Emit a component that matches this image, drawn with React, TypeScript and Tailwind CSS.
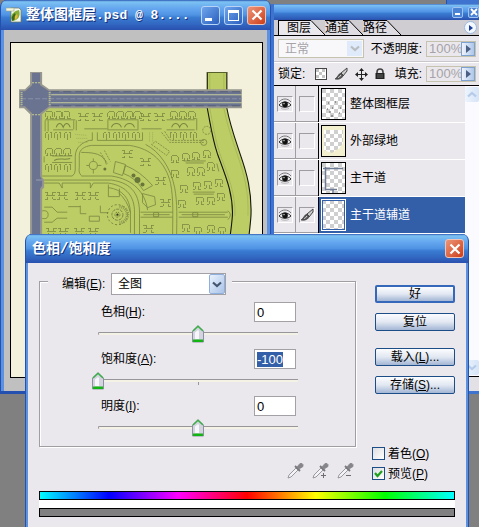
import React, { useEffect, useRef, useState } from "react";
import clsx from "clsx";

const titleBar =
  "bg-[linear-gradient(to_bottom,#2d58b4_0%,#7cc2f2_6%,#68aaf0_25%,#4f93e4_50%,#3a7cd2_58%,#3268c2_80%,#2a50ae_100%)]";

interface Layer {
  name: string;
  art: "dots" | "land" | "road" | "none";
  selected?: boolean;
}

const layers: Layer[] = [
  { name: "整体图框层", art: "dots" },
  { name: "外部绿地", art: "land" },
  { name: "主干道", art: "road" },
  { name: "主干道辅道", art: "none", selected: true },
];

/* ---------- icons ---------- */

function DocumentIcon() {
  return (
    <svg viewBox="0 0 16 16" className="h-4 w-4 shrink-0">
      <path d="M5 1h8l2 2v12H5z" fill="#f2f6ee" stroke="#6d7a55" strokeWidth="0.7" />
      <path d="M0 1h8v3H0z" fill="#f4f6e2" stroke="#9ca878" strokeWidth="0.6" />
      <path d="M13 3c-5 1-8 4-8 8l2 3c5-1 8-5 6-11z" fill="#86ad35" />
      <path d="M9 6c-3 2-4 5-3 8 3-1 5-4 3-8z" fill="#36691f" />
      <path d="M11 7c-2 1-3 3-2 6 3-2 3-4 2-6z" fill="#e5b936" />
    </svg>
  );
}

function EyeIcon() {
  return (
    <svg viewBox="0 0 14 12" className="h-3 w-3.5">
      <path d="M1 4c3-4 9-4 12 0" fill="none" stroke="#777" strokeWidth="1" />
      <path d="M1 7c3-4 9-4 12 0-3 3-9 3-12 0z" fill="#e8e8e8" stroke="#333" strokeWidth="1" />
      <circle cx="7" cy="6.4" r="2.8" fill="#111" />
      <circle cx="6" cy="5.6" r="0.8" fill="#bbb" />
      <path d="M3 10.4c2 1.2 6 1.2 8 0" fill="none" stroke="#aaa" strokeWidth="0.8" />
    </svg>
  );
}

function BrushIcon() {
  return (
    <svg viewBox="0 0 14 14" className="h-3.5 w-3.5">
      <path d="M13 1 7 6l2 3 4-5z" fill="#ccc" stroke="#444" strokeWidth="1" />
      <path d="M7 6C4 7 4 10 1 12c4 1 8-1 8-4z" fill="#555" stroke="#333" strokeWidth="0.6" />
      <path d="M4 10.500c1 0 2-1 3-2.500" stroke="#ddd" strokeWidth="1" fill="none" />
    </svg>
  );
}

function TransparencyIcon() {
  return (
    <svg viewBox="0 0 12 12" className="h-3 w-3">
      <rect x="0.5" y="0.5" width="11" height="11" fill="#fff" stroke="#444" />
      <path d="M1 1h3v3H1zM7 1h3v3H7zM4 4h3v3H4zM1 7h3v3H1zM7 7h3v3H7z" fill="#c4c4c4" />
    </svg>
  );
}

function MoveIcon() {
  return (
    <svg viewBox="0 0 13 13" className="h-[13px] w-[13px]">
      <path d="M6.5 1v11M1 6.5h11" stroke="#222" strokeWidth="1" />
      <path d="m6.5 0 2.5 3H4zM6.5 13 4 10h5zM0 6.5 3 4v5zM13 6.5 10 4v5z" fill="#222" />
    </svg>
  );
}

function LockIcon() {
  return (
    <svg viewBox="0 0 10 12" className="h-3 w-2.5">
      <path d="M2 6V4c0-4 6-4 6 0v2" fill="none" stroke="#444" strokeWidth="1.6" />
      <path d="M0.5 5h9v6h-9z" fill="#222" />
      <path d="M2 7h6M2 9h6" stroke="#777" strokeWidth="0.8" />
    </svg>
  );
}

function EyedropperIcon({ sign }: { sign?: "+" | "-" }) {
  return (
    <svg viewBox="0 0 17 18" className="h-[18px] w-[17px]">
      <path d="m1 16 1-3 7-7 2 2-7 7z" fill="#f4f4f6" stroke="#8e8e94" strokeWidth="0.9" />
      <path d="m8 4 5 5" stroke="#77777c" strokeWidth="1.8" />
      <path d="m10 5 3-3.5h2l1 1v2L12 7z" fill="#85858a" stroke="#85858a" strokeWidth="0.8" />
      {sign && <path d="M9 13.5h5" stroke="#6c6c71" />}
      {sign === "+" && <path d="M11.5 11v5" stroke="#6c6c71" />}
    </svg>
  );
}

function Chevron({ className, up }: { className?: string; up?: boolean }) {
  return (
    <svg viewBox="0 0 10 7" className={clsx("h-[7px] w-2.5", className)}>
      <path d={up ? "M1 5.5 5 2l4 3.5" : "M1 1.5 5 5l4-3.5"} fill="none" stroke="currentColor" strokeWidth="2.2" />
    </svg>
  );
}

function CloseGlyph() {
  return (
    <svg viewBox="0 0 12 12" className="h-3 w-3">
      <path d="m1.5 1.5 9 9M10.5 1.5l-9 9" stroke="#fff" strokeWidth="2.2" />
    </svg>
  );
}

/* ---------- site plan ---------- */

const arches = [
  [45, 111], [54, 111], [62, 111], [107, 111], [116, 111], [125, 111], [133, 111],
  [169, 111], [178, 111], [187, 111], [45, 148], [54, 148], [63, 148],
  [170, 155], [181, 153], [191, 152], [202, 150], [170, 169], [186, 167], [196, 167],
  [206, 162], [179, 184], [192, 181], [203, 180], [214, 178], [177, 199], [195, 196],
  [206, 196], [216, 192], [181, 223], [193, 226], [206, 224], [217, 226],
];
const tees = [
  [45, 132], [54, 132], [64, 132], [103, 132], [113, 132], [122, 132], [132, 132],
  [169, 132], [179, 132], [189, 132], [45, 164], [54, 164], [64, 164],
];
const blocks = [
  [77, 112], [91, 112], [139, 112], [153, 112], [121, 149], [139, 157], [154, 175],
  [44, 190], [56, 190], [74, 190], [87, 190], [45, 226], [57, 226], [73, 226], [87, 226],
  [142, 223], [159, 197],
];

function SitePlan() {
  return (
    <svg viewBox="11 43 250 334" preserveAspectRatio="xMinYMin slice" className="h-full w-full">
      <path d="M41 107h166c3 15 5 30 10 46 6 20 13 28 15 48v176H41z" fill="#bccd66" />
      <path d="M206 72h20v36c3 16 8 30 13 45 7 20 12 38 11 62-1 16-4 30-4 50h-20c2-20 5-35 6-50 1-22-7-40-15-62-5-15-8-30-11-45z" fill="#bccd66" />
      <path d="M206.5 72v36c3 15 5 30 10 45 8 22 16 40 15 62-1 15-4 30-6 50M226 72v36c3 16 8 30 13 45 7 20 12 38 11 62-1 16-4 30-4 50" fill="none" stroke="#15180a" strokeWidth="1.1" />
      <path d="M209 72v36c3 15 5 30 10 45 8 22 16 40 15 62M223 72v36c3 16 8 30 13 45 7 20 12 38 11 62" fill="none" stroke="#a0b055" strokeWidth="0.7" />
      <path d="M206.5 72.5H226" stroke="#55602b" />

      <g fill="none" stroke="#7b8942" strokeWidth="0.8" shapeRendering="crispEdges">
        {arches.map(([x, y]) => (
          <path key={`a${x}-${y}`} transform={`translate(${x} ${y})`} d="M0.500 7.500h2v-3M0.500 5.500v-4l1-1h5l1 1v4M5.500 4.500v3h3" />
        ))}
        {tees.map(([x, y]) => (
          <path key={`t${x}-${y}`} transform={`translate(${x} ${y})`} d="M0.500 5.500v-5h2M3.500 1.500v6M6.500 5.500v-5h-2" />
        ))}
        {blocks.map(([x, y]) => (
          <path key={`b${x}-${y}`} transform={`translate(${x} ${y})`} d="M0.500 1.500h3v3h-2M0.500 8.500h3v-2M11.500 1.500h-3v3h2M11.500 8.500h-3v-2M3.500 4.500h5" />
        ))}
      </g>
      <g fill="none" stroke="#78863f" strokeWidth="0.8">
        <path d="M45 119.5h30M45 120v11M48 120v11M53 129.500h20M73.500 120v9M107 119.5h31M107 129.5h31M107.500 120v9M137.500 120v9M166 119.5h28M166 129.5h28M52 155.500h20M52 162h20M44 156v6M76 120v10M84 128.5h23M141 128.5h20M196 118v12" />
        <path d="M56 127c2-5 5-5 7 0 2-5 5-5 7 0M111 127c2-5 8-5 10 0M124 127c2-5 8-5 10 0M171 127c2-5 6-5 8 0 2-5 6-5 8 0M54 160c5-3 10 0 16-2" strokeWidth="1" />
        <path d="M42 175.5h30q3-2 3-6V156c0-10 8-14 14-16h3v-8M97 132v8h45v-8M81 175q-3-3-2-8v-12c0-6 5-9 12-10h38c22 3 36 17 41 38 3 16 2 32 2 51" />
        <path d="M81 175.5h30c22 3 34 17 36 34M145 144c14 7 25 23 29 43 3 16 2 32 2 47" />
        <path d="M44 179.5h67c22 3 28 16 28 33v22M44 182.500h15l3 5v-5h28v5l3-5h15c19 3 26 14 26 29v22M108 187q21 3 22 25v20" />
        <path d="M81 152c12 0 23 1 25 12M86 165h3M97 165h4M93 158v3M93 169v4" />
        <circle cx="93" cy="165" r="4" />
        <path d="m100 152 7 11M104 150l6 11" strokeDasharray="2 1" />
        <path d="m115 161 10 3-3 11-9-3zM125 165q15 6 27 20l-9 5q-8-13-20-17z" />
        <path d="m142 193 12 3 1 8-8 3-5-5zM108 184v12h11v-8M118 192q9 8 12 20" />
        <path d="m151 144 15 11 3-4-14-10zM161 132l8 10h34M164 131l6 9h33" strokeDasharray="2 1" />
        <circle cx="203" cy="142" r="3" />
        <circle cx="206" cy="130" r="4" strokeDasharray="2 1" />
        <path d="M140 211.5h32M140 216.500h32M178 211.5h49M178 216.500h49M143 214h26M181 214h43M153 212h5v4h-5zM192 212h5v4h-5zM227 210q5 4 0 9" />
        <path d="M44 206.500h8l5 5h10M68 206h12M44 221.500h8l5-4h10M80 205v8h6M89 215.500h10v5H89zM100 205v7h8" />
        <path d="M183 160.500h22M185 162.5h18M192 191.5h22M193 193.5h20M216 163l2 8" />
        <path d="M75 134l12 1M76 138h12M78 142h9M149 132v10M152 132v9" stroke="#98a752" strokeDasharray="1 1" />
        <circle cx="44" cy="214" r="4" />
      </g>
      <g fill="none" stroke="#6f7d39" strokeWidth="0.9">
        <circle cx="117" cy="214" r="10" strokeDasharray="2 2" />
        <path d="M119 206a8 8 0 0 1 0 16" strokeWidth="3.500" stroke="#8e9b50" strokeDasharray="1 1" />
        <circle cx="117" cy="214" r="5.500" strokeDasharray="3 1" />
        <circle cx="117" cy="214" r="2.500" strokeDasharray="2 1" />
        <circle cx="117" cy="214" r="1" fill="#222" />
      </g>
      <g fill="#68763a">
        <circle cx="133" cy="175" r="2" />
        <circle cx="137" cy="179.5" r="3" />
        <circle cx="142" cy="184" r="2" />
        <circle cx="104.5" cy="168.5" r="1.5" />
      </g>

      <path d="M30 72h12v12l7 5h192v19H49l-7 6v63l2 2v8l-2 2v188H30V114l-6-6h-5V89h6l5-5z" fill="#97978f" />
      <path d="M32 73h8v12l9 6h191v15H49l-9 7v63l2 3v6l-2 3v189h-8V113l-7-7h-5V91h5l7-6z" fill="#6a7390" />
      <path d="M51 94.5h190M51 102.5h190" stroke="#c6cc9a" />
      <path d="M51 91.5h190M51 105.5h190" stroke="#57607a" strokeDasharray="8 4" />
      <path d="M21 98.5h220" stroke="#8890a6" strokeDasharray="5 2" />
      <path d="M21.5 92v13M49.5 92v13" stroke="#cdd08c" strokeWidth="2" strokeDasharray="1 1" />
      <path d="M32 82.500h8M32 114.5h8" stroke="#cdd08c" strokeDasharray="2 1" />
      <path d="M36 179.5h6" stroke="#9aa1b4" />
    </svg>
  );
}

/* ---------- document window ---------- */

const captionButton =
  "flex h-[19px] w-[19px] items-center justify-center rounded-[3px] border border-[#b7d3f5] bg-linear-to-br from-[#6fa5ec] to-[#2c5fbe]";
const closeButton =
  "flex h-[19px] w-[19px] items-center justify-center rounded-[3px] border border-[#eec4b8] bg-linear-to-br from-[#ec9477] to-[#cc3a10]";

function DocumentWindow() {
  return (
    <section className="absolute top-0 left-0 flex h-[394px] w-[271px] flex-col overflow-hidden rounded-t-[7px] border-x border-[#2450b0] bg-[#2450b0]">
      <header className={clsx("flex h-[30px] shrink-0 items-center pr-1 pl-[5px]", titleBar)}>
        <DocumentIcon />
        <h1 className="ml-1 flex-1 truncate font-['Liberation_Mono','Noto_Sans_CJK_SC',monospace] text-[13px] font-bold text-white [text-shadow:1px_1px_0_#12307a]">
          <span className="text-sm">整体图框层</span>.psd @ 8....
        </h1>
        <div className="flex gap-1">
          <button aria-label="Minimize" className={captionButton}>
            <span className="mt-2 mr-1 h-[3px] w-[7px] bg-white" />
          </button>
          <button aria-label="Maximize" className={captionButton}>
            <span className="h-[11px] w-[11px] border border-t-[3px] border-white" />
          </button>
          <button aria-label="Close" className={closeButton}>
            <CloseGlyph />
          </button>
        </div>
      </header>
      <div className="mb-[3px] flex min-h-0 flex-1 border-x-[3px] border-[#5c91e2] bg-[#c0c0c0] pt-3 pr-1 pb-[13px] pl-1.5">
        <div className="min-w-0 flex-1 border border-black bg-[#f3f0dc]">
          <SitePlan />
        </div>
      </div>
    </section>
  );
}

/* ---------- layers panel ---------- */

function TabSlant({ active }: { active?: boolean }) {
  return (
    <svg viewBox="0 0 14 15" className="h-[15px] w-3.5">
      <path d="M0 0 14 15H0z" fill={active ? "#ebe8ed" : "#dfdde2"} />
      <path d="M0 0.5 14 15" stroke="#000" fill="none" />
    </svg>
  );
}

function PanelTab({ label, active, first }: { label: string; active?: boolean; first?: boolean }) {
  return (
    <button className="flex h-[15px]">
      <span
        className={clsx(
          "flex items-center border-t border-black leading-none",
          first && "border-l pl-2",
          active ? "bg-[#ebe8ed]" : "bg-[#dfdde2]"
        )}
      >
        {label}
      </span>
      <TabSlant active={active} />
    </button>
  );
}

function PercentField({ id, label }: { id: string; label: string }) {
  return (
    <div className="flex items-center gap-1">
      <label htmlFor={id}>{label}</label>
      <div className="flex h-4 w-[50px] items-center border border-[#c5c3ae] bg-[#ebe8ed] pl-0.5">
        <input id={id} defaultValue="100%" disabled className="w-0 min-w-0 flex-1 text-[13px] text-[#a5a3a8]" />
        <button
          aria-label={`${label} slider`}
          className="flex h-3.5 w-3.5 shrink-0 items-center justify-center border border-[#7fa3d0] bg-linear-to-r from-[#eef4fd] to-[#adc6ea]"
        >
          <svg viewBox="0 0 5 8" className="h-2 w-[5px]">
            <path d="M0 0v8l5-4z" fill="#4b6083" />
          </svg>
        </button>
      </div>
    </div>
  );
}

function LayerThumb({ art, selected }: { art: Layer["art"]; selected?: boolean }) {
  return (
    <div className={clsx("h-8 w-[25px] shrink-0 border", selected ? "border-white" : "border-black")}>
      <svg viewBox="0 0 23 30" className="h-full w-full">
        <defs>
          <pattern id={`checker-${art}`} width="8" height="8" patternUnits="userSpaceOnUse">
            <rect width="8" height="8" fill="#fff" />
            <path d="M0 0h4v4H0zM4 4h4v4H4z" fill="#cfcfcf" />
          </pattern>
        </defs>
        <rect width="23" height="30" fill={`url(#checker-${art})`} />
        {art === "dots" && <path d="M6 14h1M10 19h1M13 13h1M7 23h2M9 27h2M17 24h1M18 19h1M5 20h1" stroke="#555" />}
        {art === "land" && <path d="M0 0h23v30H0zM2 4v20l8 3 4-3 3-1 4-6V4z" fill="#f3f0cf" fillRule="evenodd" />}
        {art === "road" && <path d="M1 5.5h20M3.5 4v23M3 26.5h12M11 27v3" stroke="#707b94" strokeWidth="1.5" fill="none" />}
        {selected && <rect x="0.5" y="0.5" width="22" height="29" fill="none" stroke="#335ea8" />}
      </svg>
    </div>
  );
}

function LayerRow({ layer }: { layer: Layer }) {
  const cell = "flex h-4 w-4 items-center justify-center border border-t-[#9f9da2] border-l-[#9f9da2] border-r-white border-b-white";
  return (
    <li className="flex h-[37px] border-b border-white">
      <div className="flex w-[22px] items-center justify-center border-r border-b border-[#9f9da2]">
        <button aria-label={`Show ${layer.name}`} className={cell}>
          <EyeIcon />
        </button>
      </div>
      <div className="flex w-[22px] items-center justify-center border-b border-[#9f9da2]">
        <button aria-label={`Link ${layer.name}`} className={cell}>
          {layer.selected && <BrushIcon />}
        </button>
      </div>
      <div
        className={clsx(
          "flex min-w-0 flex-1 items-center gap-1 border-l border-black pl-0.5",
          layer.selected && "bg-[#335ea8] text-white"
        )}
      >
        <LayerThumb art={layer.art} selected={layer.selected} />
        <span className="truncate">{layer.name}</span>
      </div>
    </li>
  );
}

function LayersPanel() {
  const smallCaption =
    "flex h-[11px] w-[11px] items-center justify-center rounded-[2px] border border-[#9fc3f0] bg-[#4a82d6]";
  const scrollButton =
    "flex h-[15px] w-full items-center justify-center rounded-[2px] bg-linear-to-r from-[#edf4fd] to-[#d5e4f8] text-[#b5cbe8]";
  return (
    <section className="absolute top-1 right-0 left-[271px] flex h-[390px] flex-col border-b-[3px] border-l-[3px] border-[#3e74cf] bg-[#ebe8ed]">
      <header className={clsx("flex h-4 shrink-0 items-center justify-end gap-[5px]", titleBar)}>
        <button aria-label="Minimize panel" className={smallCaption}>
          <span className="mt-1 h-0.5 w-[5px] bg-white" />
        </button>
        <button aria-label="Close panel" className={smallCaption}>
          <svg viewBox="0 0 8 8" className="h-2 w-2">
            <path d="m1 1 6 6M7 1 1 7" stroke="#fff" strokeWidth="1.8" />
          </svg>
        </button>
      </header>

      <nav className="flex h-4 shrink-0 items-end border-b border-black bg-[#cfcdd1] pl-1">
        <PanelTab label="图层" active first />
        <PanelTab label="通道" />
        <PanelTab label="路径" />
        <button
          aria-label="Panel menu"
          className="mr-0.5 mb-px ml-auto flex h-[13px] w-[13px] items-center justify-center rounded-full border border-[#9db8e0] bg-[#f3f7fe]"
        >
          <svg viewBox="0 0 4 6" className="h-1.5 w-1">
            <path d="M0 0v6l4-3z" fill="#1d3f9c" />
          </svg>
        </button>
      </nav>

      <div className="flex h-[26px] shrink-0 items-center justify-between border-b border-[#c9c7cb] pr-[3px] pl-1">
        <div className="relative h-[19px] w-[86px]">
          <select
            aria-label="Blend mode"
            disabled
            className="h-full w-full appearance-none border border-[#c5c3ae] bg-[#f8f7f9] pl-1.5 text-[#a5a3a8] opacity-100"
          >
            <option>正常</option>
          </select>
          <span className="pointer-events-none absolute top-0.5 right-0.5 flex h-[15px] w-[15px] items-center justify-center bg-[#dfeafa] text-[#b9bdbf]">
            <Chevron />
          </span>
        </div>
        <PercentField id="opacity" label="不透明度:" />
      </div>

      <div className="flex h-6 shrink-0 items-center justify-between border-t border-b border-t-white border-b-black pr-[3px] pl-1">
        <span>锁定:</span>
        <div className="flex items-center gap-[7px]">
          <button aria-label="Lock transparency"><TransparencyIcon /></button>
          <button aria-label="Lock pixels"><BrushIcon /></button>
          <button aria-label="Lock position"><MoveIcon /></button>
          <button aria-label="Lock all"><LockIcon /></button>
        </div>
        <PercentField id="fill" label="填充:" />
      </div>

      <div className="flex min-h-0 flex-1">
        <ul className="min-w-0 flex-1">
          {layers.map((layer) => (
            <LayerRow key={layer.name} layer={layer} />
          ))}
        </ul>
        <div className="flex w-3.5 flex-col justify-between bg-[#fafaff] py-px">
          <button aria-label="Scroll up" className={scrollButton}><Chevron up /></button>
          <button aria-label="Scroll down" className={scrollButton}><Chevron /></button>
        </div>
      </div>
      <footer className="h-[15px] shrink-0 border-t border-black bg-[#e3e1e6]" />
    </section>
  );
}

/* ---------- hue / saturation dialog ---------- */

function Mnemonic({ text, letter, suffix }: { text: string; letter: string; suffix?: string }) {
  return (
    <>
      {text}(<u className="underline-offset-1">{letter}</u>){suffix}
    </>
  );
}

function SliderThumb() {
  return (
    <svg viewBox="0 0 12 18" className="h-[18px] w-3">
      <path d="M0.5 6 6 0.8 11.5 6v11H0.5z" fill="#d4d4de" stroke="#8d8fa3" />
      <path d="M3 7.5 6 5l1 1v8H3z" fill="#f6f6fb" />
      <path d="M1 6 6 1.3 11 6" fill="none" stroke="#3cae49" strokeWidth="1.5" />
      <path d="M1 14.5h10V17H1z" fill="#12b512" />
    </svg>
  );
}

interface AdjustmentProps {
  id: string;
  text: string;
  letter: string;
  initial: number;
  active?: boolean;
}

function Adjustment({ id, text, letter, initial, active }: AdjustmentProps) {
  const [value, setValue] = useState(String(initial));
  const inputRef = useRef<HTMLInputElement>(null);

  useEffect(() => {
    if (active) {
      inputRef.current?.focus();
      inputRef.current?.select();
    }
  }, [active]);

  const position = ((Number(value) || 0) + 100) / 200;

  return (
    <div className="h-[47px] w-[212px]">
      <div className="flex h-5 items-center justify-between pr-2 pl-[9px]">
        <label htmlFor={id}>
          <Mnemonic text={text} letter={letter} suffix=":" />
        </label>
        <input
          id={id}
          ref={inputRef}
          value={value}
          onChange={(e) => setValue(e.target.value)}
          className="h-5 w-[42px] border border-[#a3a1a6] bg-white pl-0.5 text-[13px] outline-none selection:bg-[#335ea8] selection:text-white"
        />
      </div>
      <div className="relative mt-[3px] h-[18px]">
        <div className="px-1.5 pt-[7px]">
          <div className="h-[3px] rounded-l-full border-t border-l border-[#98969b] bg-[#f4f2e4]" />
          <div className="mx-auto h-[3px] w-px bg-[#98969b]" />
        </div>
        <div className="absolute top-0" style={{ left: `calc((100% - 12px) * ${position})` }}>
          <SliderThumb />
        </div>
        <input
          type="range"
          aria-label={text}
          min={-100}
          max={100}
          value={Number(value) || 0}
          onChange={(e) => setValue(e.target.value)}
          className="absolute inset-0 h-full w-full appearance-none bg-transparent [&::-webkit-slider-thumb]:h-[18px] [&::-webkit-slider-thumb]:w-3 [&::-webkit-slider-thumb]:appearance-none"
        />
      </div>
    </div>
  );
}

function DialogButton({ children, primary }: { children: React.ReactNode; primary?: boolean }) {
  return (
    <button
      className={clsx(
        "flex h-[18px] w-full items-center justify-center rounded-[2px] bg-linear-to-b from-[#fbfcfe] via-[#e2e8f2] to-[#a3b6d4] leading-none",
        primary ? "border-2 border-[#3568b8]" : "border border-[#1d4d86]"
      )}
    >
      {children}
    </button>
  );
}

function CheckOption({ id, text, letter, checked }: { id: string; text: string; letter: string; checked?: boolean }) {
  return (
    <div className="flex h-[13px] items-center gap-[3px]">
      <span className="relative h-[13px] w-[13px]">
        <input
          id={id}
          type="checkbox"
          defaultChecked={checked}
          className="peer block h-[13px] w-[13px] appearance-none border border-[#1d4d86] bg-linear-to-br from-[#dddde0] to-white"
        />
        <svg viewBox="0 0 9 9" className="pointer-events-none absolute top-0.5 left-0.5 hidden h-[9px] w-[9px] peer-checked:block">
          <path d="M1 4l2.5 3L8 2" fill="none" stroke="#1fa01f" strokeWidth="2.2" />
        </svg>
      </span>
      <label htmlFor={id}>
        <Mnemonic text={text} letter={letter} />
      </label>
    </div>
  );
}

function HueSaturationDialog() {
  return (
    <section
      role="dialog"
      aria-label="色相/饱和度"
      className="absolute top-[234px] right-[10px] left-[25px] overflow-hidden rounded-t-[7px] border-x border-[#2450b0] bg-[#2450b0]"
    >
      <header className={clsx("flex h-[29px] items-center justify-between pr-1 pl-1.5", titleBar)}>
        <h2 className="font-['Liberation_Mono','Noto_Sans_CJK_SC',monospace] text-sm font-bold text-white [text-shadow:1px_1px_0_#12307a]">
          色相/饱和度
        </h2>
        <button aria-label="Close dialog" className={closeButton}>
          <CloseGlyph />
        </button>
      </header>
      <div className="border-x-2 border-[#5c91e2] bg-[#ebe8ed] px-[11px] pt-2.5 pb-6">
        <div className="flex gap-[19px]">
          <fieldset className="h-[174px] min-w-0 flex-1 border border-[#a09ea3] shadow-[inset_1px_1px_0_#fff,1px_1px_0_#fff]">
            <legend className="ml-2 flex h-4 w-[184px] items-start bg-[#ebe8ed] pl-3.5">
              <label htmlFor="edit-range" className="flex h-[22px] w-[49px] items-center">
                <span>
                  <Mnemonic text="编辑" letter="E" suffix=":" />
                </span>
              </label>
              <span className="relative h-[22px] w-[115px]">
                <select id="edit-range" className="h-full w-full appearance-none border border-[#a3a1a6] bg-white pl-1.5">
                  <option>全图</option>
                </select>
                <span className="pointer-events-none absolute top-px right-px flex h-5 w-4 items-center justify-center rounded-[2px] border border-[#8fb0dc] bg-linear-to-br from-[#eaf2fd] to-[#a9c3e8] text-[#44566f]">
                  <Chevron />
                </span>
              </span>
            </legend>
            <div className="pt-[13px] pl-[52px]">
              <Adjustment id="hue" text="色相" letter="H" initial={0} />
              <Adjustment id="saturation" text="饱和度" letter="A" initial={-100} active />
              <Adjustment id="lightness" text="明度" letter="I" initial={0} />
            </div>
          </fieldset>
          <div className="flex w-20 flex-col gap-2.5 pt-3">
            <DialogButton primary>好</DialogButton>
            <DialogButton>复位</DialogButton>
            <div className="mt-[7px] flex flex-col gap-2.5">
              <DialogButton>
                <Mnemonic text="载入" letter="L" suffix="..." />
              </DialogButton>
              <DialogButton>
                <Mnemonic text="存储" letter="S" suffix="..." />
              </DialogButton>
            </div>
          </div>
        </div>

        <div className="flex items-end justify-end gap-[18px]">
          <div className="flex gap-2">
            <button aria-label="Eyedropper"><EyedropperIcon /></button>
            <button aria-label="Add to sample"><EyedropperIcon sign="+" /></button>
            <button aria-label="Subtract from sample"><EyedropperIcon sign="-" /></button>
          </div>
          <div className="flex w-[83px] flex-col gap-[7px]">
            <CheckOption id="colorize" text="着色" letter="O" />
            <CheckOption id="preview" text="预览" letter="P" checked />
          </div>
        </div>

        <div className="mt-[11px] bg-white">
          <div className="h-[9px] border border-black bg-[linear-gradient(to_right,#0ff,#00f,#f0f,#f00,#ff0,#0f0,#0ff)]" />
          <div className="mt-2 h-[9px] border border-black bg-[#808080]" />
        </div>
      </div>
    </section>
  );
}

export default function App() {
  return (
    <main className="relative h-screen w-full overflow-hidden bg-[#808080] font-['Liberation_Sans','Noto_Sans_CJK_SC',sans-serif] text-xs text-black">
      {/* edge of a palette docked above the layers panel */}
      <div className="absolute top-0 right-0 h-1 w-[33px] border-l border-[#2450b0] bg-[#3e74cf]" />
      <DocumentWindow />
      <LayersPanel />
      <HueSaturationDialog />
    </main>
  );
}
